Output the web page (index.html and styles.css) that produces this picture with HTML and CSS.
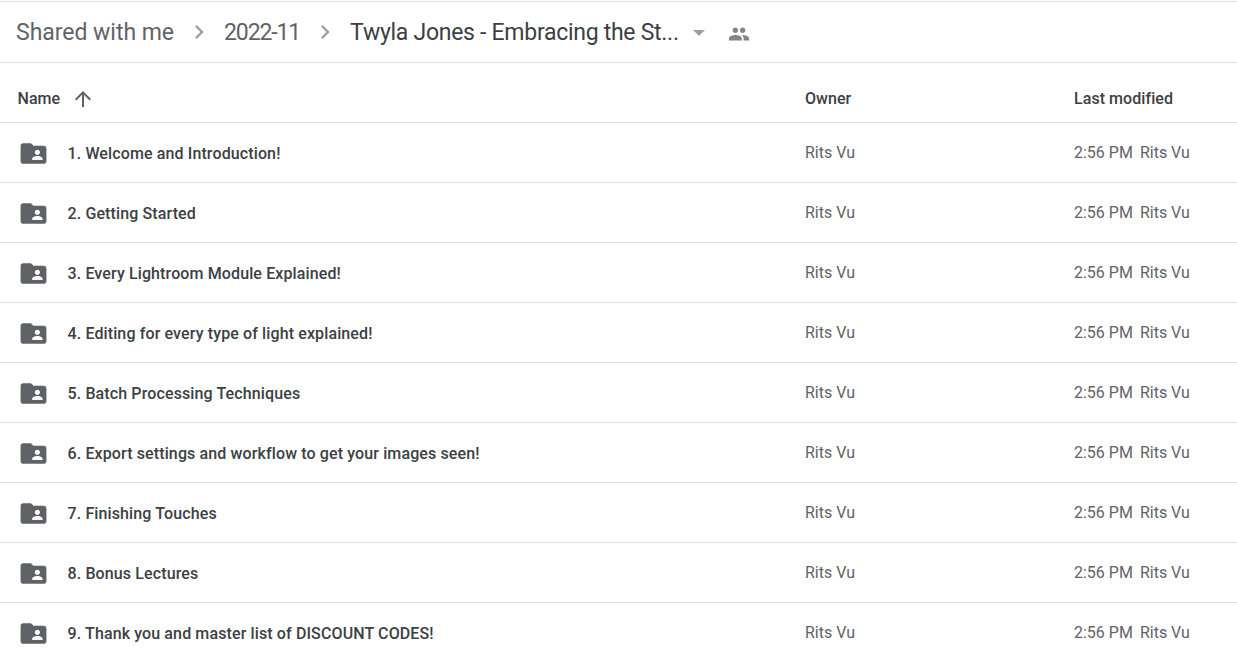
FILE: index.html
```html
<!DOCTYPE html>
<html lang="en">
<head>
<meta charset="utf-8">
<title>Twyla Jones - Embracing the Storm</title>
<link rel="stylesheet" href="styles.css">
</head>
<body>
<svg class="defs" width="0" height="0" aria-hidden="true">
  <symbol id="folder" viewBox="0 0 24 24"><path d="M10 4H4c-1.1 0-2 .9-2 2v12c0 1.1.9 2 2 2h16c1.1 0 2-.9 2-2V8c0-1.1-.9-2-2-2h-8l-2-2zm5 5c1.1 0 2 .9 2 2s-.9 2-2 2-2-.9-2-2 .9-2 2-2zm4 8h-8v-1c0-1.33 2.67-2 4-2s4 .67 4 2v1z"/></symbol>
  <symbol id="chevron" viewBox="0 0 24 24"><path d="M10 6L8.59 7.41 13.17 12l-4.58 4.59L10 18l6-6z"/></symbol>
</svg>
<header class="crumbs">
  <span class="crumb shared">Shared with me</span>
  <svg class="chevron"><use href="#chevron"/></svg>
  <span class="crumb year">2022-11</span>
  <svg class="chevron"><use href="#chevron"/></svg>
  <span class="crumb current">Twyla Jones - Embracing the St...</span>
  <span class="caret"></span>
  <svg class="people" viewBox="0 0 24 24"><path d="M16 11c1.66 0 2.99-1.34 2.99-3S17.66 5 16 5c-1.66 0-3 1.34-3 3s1.34 3 3 3zm-8 0c1.66 0 2.99-1.34 2.99-3S9.66 5 8 5C6.34 5 5 6.34 5 8s1.34 3 3 3zm0 2c-2.33 0-7 1.17-7 3.5V19h14v-2.5c0-2.33-4.67-3.5-7-3.5zm8 0c-.29 0-.62.02-.97.05 1.16.84 1.97 1.97 1.97 3.45V19h6v-2.5c0-2.33-4.67-3.5-7-3.5z"/></svg>
</header>
<main class="list">
  <div class="row head">
    <div class="name"><span>Name</span><svg class="arrow" viewBox="0 0 24 24"><path d="M4 12l1.41 1.41L11 7.83V20h2V7.83l5.58 5.59L20 12l-8-8-8 8z"/></svg></div>
    <div class="owner">Owner</div>
    <div class="modified">Last modified</div>
  </div>
  <div class="row item"><div class="name"><svg class="folder"><use href="#folder"/></svg><span>1. Welcome and Introduction!</span></div><div class="owner">Rits Vu</div><div class="modified"><span class="time">2:56 PM</span><span>Rits Vu</span></div></div>
  <div class="row item"><div class="name"><svg class="folder"><use href="#folder"/></svg><span>2. Getting Started</span></div><div class="owner">Rits Vu</div><div class="modified"><span class="time">2:56 PM</span><span>Rits Vu</span></div></div>
  <div class="row item"><div class="name"><svg class="folder"><use href="#folder"/></svg><span>3. Every Lightroom Module Explained!</span></div><div class="owner">Rits Vu</div><div class="modified"><span class="time">2:56 PM</span><span>Rits Vu</span></div></div>
  <div class="row item"><div class="name"><svg class="folder"><use href="#folder"/></svg><span>4. Editing for every type of light explained!</span></div><div class="owner">Rits Vu</div><div class="modified"><span class="time">2:56 PM</span><span>Rits Vu</span></div></div>
  <div class="row item"><div class="name"><svg class="folder"><use href="#folder"/></svg><span>5. Batch Processing Techniques</span></div><div class="owner">Rits Vu</div><div class="modified"><span class="time">2:56 PM</span><span>Rits Vu</span></div></div>
  <div class="row item"><div class="name"><svg class="folder"><use href="#folder"/></svg><span>6. Export settings and workflow to get your images seen!</span></div><div class="owner">Rits Vu</div><div class="modified"><span class="time">2:56 PM</span><span>Rits Vu</span></div></div>
  <div class="row item"><div class="name"><svg class="folder"><use href="#folder"/></svg><span>7. Finishing Touches</span></div><div class="owner">Rits Vu</div><div class="modified"><span class="time">2:56 PM</span><span>Rits Vu</span></div></div>
  <div class="row item"><div class="name"><svg class="folder"><use href="#folder"/></svg><span>8. Bonus Lectures</span></div><div class="owner">Rits Vu</div><div class="modified"><span class="time">2:56 PM</span><span>Rits Vu</span></div></div>
  <div class="row item"><div class="name"><svg class="folder"><use href="#folder"/></svg><span>9. Thank you and master list of DISCOUNT CODES!</span></div><div class="owner">Rits Vu</div><div class="modified"><span class="time">2:56 PM</span><span>Rits Vu</span></div></div>
</main>
</body>
</html>
```
FILE: styles.css
```css
html, body {
  margin: 0;
  height: 100%;
  overflow: hidden;
  background: #fff;
}
body {
  padding-top: 1px;
  box-sizing: border-box;
  font-family: Roboto, "Liberation Sans", sans-serif;
  color: #3c4043;
}
.defs { position: absolute; }
.crumbs {
  box-sizing: border-box;
  height: 62px;
  border-top: 1px solid #dadce0;
  border-bottom: 1px solid #dadce0;
  display: flex;
  align-items: center;
  padding-left: 16px;
}
.crumb {
  font-family: Roboto, sans-serif;
  font-size: 23px;
  color: #3c4043;
  white-space: nowrap;
}
.crumb.shared { color: #5f6368; letter-spacing: -.03px; }
.crumb.year { color: #5f6368; letter-spacing: -1.12px; }
.crumb.current { letter-spacing: -.28px; }
.chevron {
  width: 28px;
  height: 28px;
  fill: #9aa0a6;
  margin: 0 11px;
}
.caret {
  width: 0;
  height: 0;
  margin-left: 14px;
  margin-top: 2px;
  border-left: 6.5px solid transparent;
  border-right: 6.5px solid transparent;
  border-top: 6.5px solid #9aa0a6;
}
.people {
  width: 22px;
  height: 22px;
  margin-left: 23px;
  margin-top: 4px;
  fill: #80868b;
}
.row {
  box-sizing: border-box;
  height: 60px;
  border-bottom: 1px solid #dadce0;
  display: grid;
  grid-template-columns: 805px 269px 1fr;
  align-items: center;
  font-size: 16px;
  color: #5f6368;
}
.row:last-child { border-bottom-color: transparent; }
.name {
  display: flex;
  align-items: center;
  font-weight: 500;
  color: #3c4043;
  padding-left: 17.5px;
}
.item .name {
  padding-top: 2px;
  letter-spacing: .12px;
}
.name span { white-space: nowrap; }
.folder {
  width: 31px;
  height: 31px;
  fill: #5f6368;
  margin-right: 19px;
  margin-bottom: 1px;
}
.arrow {
  width: 24px;
  height: 24px;
  fill: #5f6368;
  margin-left: 11px;
}
.head {
  color: #3c4043;
  font-weight: 500;
  padding-top: 12px;
  letter-spacing: .06px;
}
.time { margin-right: 7px; }
.modified { white-space: nowrap; }
```
